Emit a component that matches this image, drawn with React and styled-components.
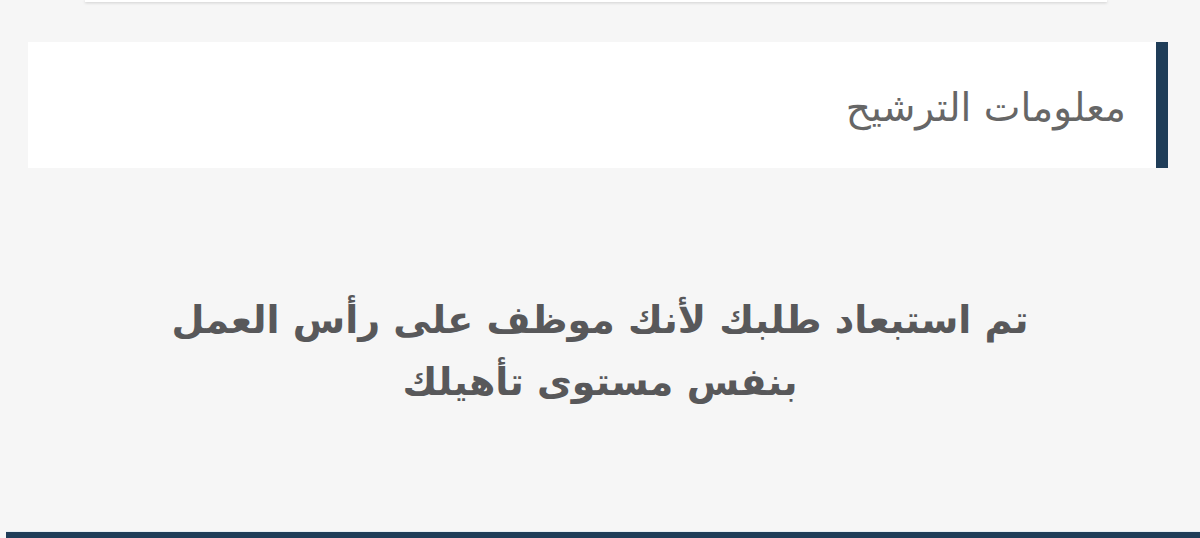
import React from 'react';
import styled, { createGlobalStyle } from 'styled-components';

const GlobalStyle = createGlobalStyle`
  html, body {
    margin: 0;
    padding: 0;
    background: #f6f6f6;
  }
  body {
    font-family: "DejaVu Sans", "Noto Sans", sans-serif;
  }
`;

const Page = styled.div`
  display: flex;
  flex-direction: column;
  min-height: 538px;
  overflow: hidden;
`;

// bottom edge of the card above, scrolled mostly out of view
const PrevCard = styled.div`
  height: 2px;
  margin: 0 93px 0 85px;
  background: #ffffff;
  box-shadow: 0 1px 3px rgba(0, 0, 0, 0.18);
`;

const SectionHeader = styled.div`
  display: flex;
  align-items: center;
  height: 126px;
  margin: 40px 32px 0 28px;
  padding-right: 30px;
  background: #ffffff;
  border-right: 12px solid #1f3d58;
  direction: rtl;
`;

const SectionTitle = styled.h2`
  margin: 4px 0 0;
  font-size: 39px;
  font-weight: normal;
  color: #666666;
`;

const Notice = styled.p`
  margin: 121px 0 0;
  direction: rtl;
  text-align: center;
  font-size: 38px;
  font-weight: bold;
  line-height: 62px;
  color: #58585a;
`;

const Footer = styled.div`
  margin-top: auto;
  margin-left: 6px;
  height: 6px;
  background: #1f3d58;
  border-top: 1px solid #e6eef4;
`;

export default function App() {
  return (
    <>
      <GlobalStyle />
      <Page>
        <PrevCard />
        <SectionHeader>
          <SectionTitle>معلومات الترشيح</SectionTitle>
        </SectionHeader>
        <Notice>
          تم استبعاد طلبك لأنك موظف على رأس العمل
          <br />
          بنفس مستوى تأهيلك
        </Notice>
        <Footer />
      </Page>
    </>
  );
}
